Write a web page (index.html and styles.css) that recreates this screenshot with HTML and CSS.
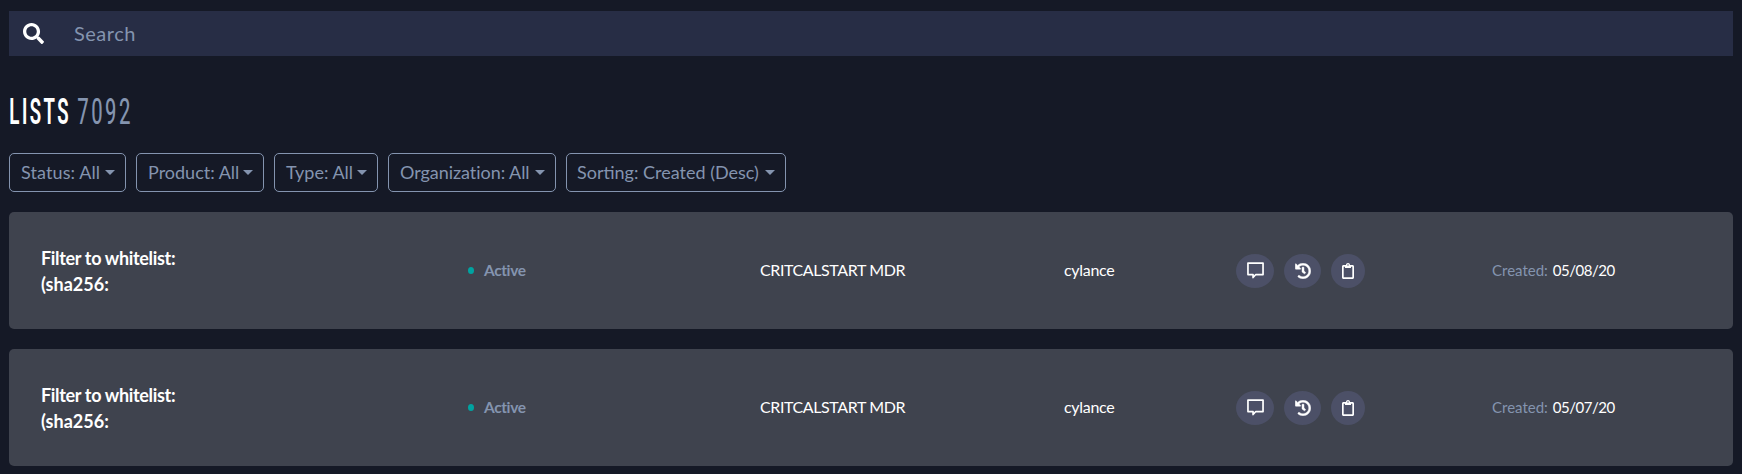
FILE: index.html
```html
<!DOCTYPE html>
<html lang="en">
<head>
<meta charset="utf-8">
<title>Lists</title>
<link rel="stylesheet" href="styles.css">
</head>
<body>
<svg class="sprite" aria-hidden="true">
  <symbol id="search" viewBox="0 0 512 512"><path d="M505 442.700L405.300 343c-4.500-4.500-10.600-7-17-7H372c27.600-35.300 44-79.700 44-128C416 93.100 322.900 0 208 0S0 93.100 0 208s93.100 208 208 208c48.300 0 92.700-16.400 128-44v16.300c0 6.400 2.500 12.500 7 17l99.700 99.700c9.400 9.400 24.600 9.400 33.900 0l28.300-28.300c9.400-9.400 9.400-24.600.1-34zM208 336c-70.700 0-128-57.200-128-128 0-70.700 57.200-128 128-128 70.700 0 128 57.200 128 128 0 70.700-57.200 128-128 128z"/></symbol>
  <symbol id="comment" viewBox="0 0 16 16"><path d="M.9 1h14.200v10.800H8.300L5.700 14.600v-2.800H.9z" fill="none" stroke="currentColor" stroke-width="1.600" stroke-linejoin="round"/></symbol>
  <symbol id="history" viewBox="0 0 512 512"><path d="M504 255.500c.3 136.600-111.200 248.400-247.800 248.500-59 0-113.200-20.500-155.800-54.900-11.100-8.900-11.900-25.500-1.800-35.600l11.300-11.300c8.600-8.600 22.400-9.600 31.900-2C173.100 425.100 212.800 440 256 440c101.700 0 184-82.300 184-184 0-101.700-82.300-184-184-184-48.800 0-93.100 19-126.100 49.900l50.800 50.800c10.100 10.100 2.900 27.300-11.300 27.300H24c-8.800 0-16-7.200-16-16V38.600c0-14.300 17.200-21.400 27.300-11.300l49.400 49.400C129.200 34.100 189.600 8 256 8c136.800 0 247.700 110.800 248 247.500zm-180.900 78.800 9.800-12.600c8.100-10.500 6.300-25.500-4.200-33.700L288 256.300V152c0-13.300-10.700-24-24-24h-16c-13.300 0-24 10.700-24 24v135.700l65.400 50.900c10.500 8.100 25.500 6.300 33.700-4.200z" stroke="currentColor" stroke-width="14"/></symbol>
  <symbol id="clipboard" viewBox="0 0 384 512"><path d="M336 64h-80c0-35.300-28.700-64-64-64s-64 28.700-64 64H48C21.500 64 0 85.500 0 112v352c0 26.500 21.500 48 48 48h288c26.500 0 48-21.500 48-48V112c0-26.500-21.500-48-48-48zM192 40c13.300 0 24 10.700 24 24s-10.700 24-24 24-24-10.700-24-24 10.700-24 24-24zm138 418H54V118h42v30c0 7 5 12 12 12h168c7 0 12-5 12-12v-30h42z"/></symbol>
</svg>

<div class="search">
  <svg class="search-icon"><use href="#search"/></svg>
  <span class="placeholder">Search</span>
</div>

<h1 class="heading"><span class="heading-name">LISTS</span><span class="heading-count">7092</span></h1>

<div class="filters">
  <button class="filter status">Status: All</button>
  <button class="filter product">Product: All</button>
  <button class="filter type">Type: All</button>
  <button class="filter organization">Organization: All</button>
  <button class="filter sorting">Sorting: Created (Desc)</button>
</div>

<div class="cards">
  <div class="card">
    <div class="title"><span class="title-line">Filter to whitelist:</span><br>(sha256:</div>
    <div class="state"><i class="dot"></i><span class="text">Active</span></div>
    <div class="org text">CRITCALSTART MDR</div>
    <div class="product-name text">cylance</div>
    <div class="actions">
      <span class="action comment"><svg><use href="#comment"/></svg></span>
      <span class="action history"><svg><use href="#history"/></svg></span>
      <span class="action clipboard"><svg><use href="#clipboard"/></svg></span>
    </div>
    <div class="created text"><span class="label">Created:</span><span class="date">05/08/20</span></div>
  </div>
  <div class="card">
    <div class="title"><span class="title-line">Filter to whitelist:</span><br>(sha256:</div>
    <div class="state"><i class="dot"></i><span class="text">Active</span></div>
    <div class="org text">CRITCALSTART MDR</div>
    <div class="product-name text">cylance</div>
    <div class="actions">
      <span class="action comment"><svg><use href="#comment"/></svg></span>
      <span class="action history"><svg><use href="#history"/></svg></span>
      <span class="action clipboard"><svg><use href="#clipboard"/></svg></span>
    </div>
    <div class="created text"><span class="label">Created:</span><span class="date">05/07/20</span></div>
  </div>
</div>
</body>
</html>
```
FILE: styles.css
```css
* { box-sizing: border-box; }
body {
  margin: 0;
  padding: 11px 9px 0;
  height: 474px;
  overflow: hidden;
  background: #151926;
  color: #fff;
  font-family: Lato, "Noto Sans", sans-serif;
  font-size: 16px;
}
svg { display: block; fill: currentColor; }
.sprite { display: none; }

.search {
  display: flex;
  align-items: center;
  gap: 29px;
  height: 45px;
  padding-left: 14px;
  background: #272d45;
  color: #8494af;
  font-size: 20px;
  letter-spacing: .5px;
}
.search-icon { width: 21px; height: 21px; color: #fff; }
.placeholder { padding: 0 0 2px 1px; }

.heading {
  display: flex;
  height: 42px;
  margin: 35px 0 20px;
  font: 400 36px/42px "Roboto Condensed", Roboto, sans-serif;
}
.heading span { transform-origin: 0 50%; white-space: nowrap; }
.heading-name { width: 68px; transform: scaleX(.62); letter-spacing: 3.2px; font-weight: 500; }
.heading-count { transform: scaleX(.67); letter-spacing: 3px; color: #8494af; }

.filters { display: flex; gap: 10px; height: 39px; }
.filter {
  display: flex;
  align-items: center;
  justify-content: space-between;
  padding: 0 10px 1px 11px;
  border: 1px solid #8494af;
  border-radius: 5px;
  background: none;
  color: #8494af;
  font: 400 18px/27px Lato, sans-serif;
  white-space: nowrap;
}
.filter::after {
  content: "";
  border: 5.5px solid transparent;
  border-top-color: currentColor;
  border-bottom: 0;
}
.status { width: 117px; letter-spacing: .1px; }
.product { width: 128px; }
.type { width: 104px; }
.organization { width: 168px; letter-spacing: -.05px; }
.sorting { width: 220px; padding-left: 10px; }

.cards { display: grid; gap: 20px; margin-top: 20px; }
.card {
  display: grid;
  grid-template-columns: 427px 292px 304px 172px 256px 1fr;
  align-items: center;
  height: 117px;
  padding-left: 32px;
  border-radius: 5px;
  background: #3f434e;
  white-space: nowrap;
}
.text { padding-bottom: 2px; }
.title { font-size: 18px; font-weight: 700; line-height: 26px; }
.title-line { letter-spacing: -.33px; }
.state {
  display: flex;
  align-items: center;
  gap: 10px;
  color: #8494af;
  font-size: 15.500px;
  font-weight: 700;
  letter-spacing: -.4px;
}
.dot { width: 6px; height: 7px; border-radius: 50%; background: #00a3a1; }
.org { letter-spacing: -.4px; }
.product-name { letter-spacing: -.3px; }
.actions { display: flex; gap: 10px; }
.action {
  display: grid;
  place-items: center;
  height: 34px;
  border-radius: 50%;
  background: #4c5067;
}
.action.comment { width: 38px; }
.action.history { width: 37px; }
.action.clipboard { width: 34px; }
.comment svg { width: 17px; height: 17px; }
.history svg { width: 16px; height: 16px; }
.clipboard svg { width: 12px; height: 16px; }
.created { display: flex; gap: 5px; }
.label { color: #8494af; font-size: 15px; }
.date { font-size: 15px; letter-spacing: -.5px; }
```
